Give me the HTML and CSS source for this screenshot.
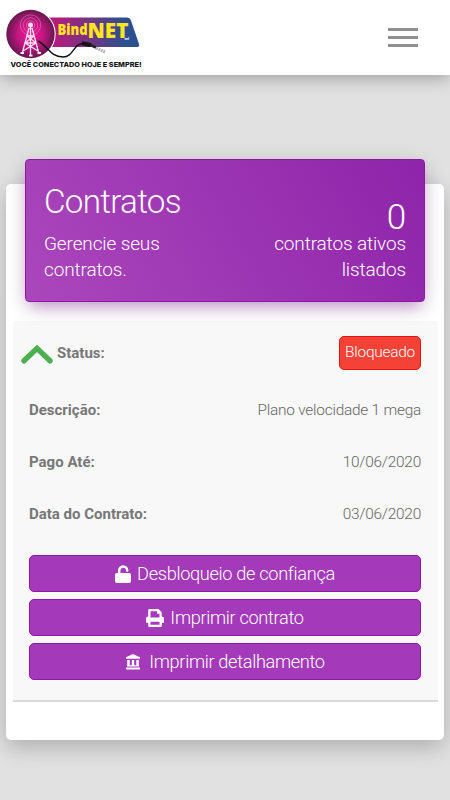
FILE: index.html
```html
<!DOCTYPE html>
<html lang="pt-BR">
<head>
    <meta charset="UTF-8">
    <meta name="viewport" content="width=device-width, initial-scale=1.0">
    <title>Contratos - BindNET</title>
    <link rel="stylesheet" href="styles.css">
</head>
<body>
    <header class="navbar">
        <svg class="logo" viewBox="0 0 150 75" role="img" aria-label="BindNET">
            <defs>
                <linearGradient id="plate" x1="0" x2="1">
                    <stop offset="0" stop-color="#c4157f"/>
                    <stop offset=".45" stop-color="#743582"/>
                    <stop offset=".85" stop-color="#2a5090"/>
                </linearGradient>
                <radialGradient id="disc">
                    <stop offset="0" stop-color="#ed1596"/>
                    <stop offset=".5" stop-color="#c81684"/>
                    <stop offset="1" stop-color="#67184f"/>
                </radialGradient>
            </defs>
            <path d="M48 17.5H127Q130 17.5 130.8 20L139 44Q140 47 137 47H48Z" fill="url(#plate)"/>
            <circle cx="30.5" cy="34" r="25.2" fill="#fff"/>
            <circle cx="30.5" cy="34" r="24.2" fill="url(#disc)"/>
            <g fill="none" stroke="#e98bc2" stroke-width=".5">
                <circle cx="30.5" cy="25" r="4.2"/>
                <circle cx="30.5" cy="25" r="7.2"/>
                <circle cx="30.5" cy="25" r="10.2"/>
            </g>
            <circle cx="30.5" cy="25" r="2.5" fill="#fbe3f0"/>
            <path d="M30.5 26V55M29 28L22 54M32 28L39 54M27 36H34M25 43H36M27 36L36 43M34 36L25 43M25 43L38 51M36 43L23 51" fill="none" stroke="#fbe3f0" stroke-width="1.3"/>
            <path d="M20.5 53H24M29 55.5H32.5M37.5 53H41" stroke="#fbe3f0" stroke-width="2.2"/>
            <path d="M38 41C48 46 50 57 63 57C74 57 73 43 84 43.5L90 44" fill="none" stroke="#111" stroke-width="1.4"/>
            <path d="M82 43.2L91 45" stroke="#151515" stroke-width="4"/>
            <path d="M91 45.2L96 47.5" stroke="#222" stroke-width="2.6"/>
            <path d="M96 48L105 52" stroke="#b5b5b5" stroke-width="3.2" stroke-dasharray="2 .7"/>
            <text class="logo-bind" x="57.5" y="35" textLength="30" lengthAdjust="spacingAndGlyphs">Bind</text>
            <text class="logo-net" x="87.5" y="38" textLength="41" lengthAdjust="spacingAndGlyphs">NET</text>
            <text class="logo-mark" x="124.5" y="39.5">tel</text>
            <text class="logo-tag" x="10.5" y="66.8" textLength="131" lengthAdjust="spacingAndGlyphs">VOCÊ CONECTADO HOJE E SEMPRE!</text>
        </svg>
        <button class="toggler" aria-label="Menu">
            <span></span>
            <span></span>
            <span></span>
        </button>
    </header>

    <main class="card">
        <div class="card-header">
            <div class="heading">
                <h1>Contratos</h1>
                <p>Gerencie seus contratos.</p>
            </div>
            <div class="total">
                <strong>0</strong>
                <p>contratos ativos listados</p>
            </div>
        </div>

        <section class="contract">
            <div class="row status">
                <svg class="chevron" viewBox="0 0 32 20"><path d="M3 16.8L16 4.4L29 16.8"/></svg>
                <b>Status:</b>
                <span class="badge">Bloqueado</span>
            </div>
            <div class="row"><b>Descrição:</b><span>Plano velocidade 1 mega</span></div>
            <div class="row"><b>Pago Até:</b><span>10/06/2020</span></div>
            <div class="row"><b>Data do Contrato:</b><span>03/06/2020</span></div>

            <div class="actions">
                <button class="btn">
                    <svg class="icon-lock" viewBox="0 0 16 18">
                        <rect y="8" width="16" height="10" rx="2"/>
                        <path d="M4.2 9V5.5A4 4 0 0 1 12.2 5.5" fill="none" stroke="#fff" stroke-width="2.5" stroke-linecap="round"/>
                    </svg>
                    Desbloqueio de confiança
                </button>
                <button class="btn">
                    <svg class="icon-print" viewBox="0 0 18 18">
                        <path fill-rule="evenodd" d="M3.4 0H12.5L15.7 3.2V7.5A2.3 2.3 0 0 1 18 9.8V13.7H15.8V16.8Q15.8 18 14.6 18H3.4Q2.2 18 2.2 16.8V13.7H0V9.8A2.3 2.3 0 0 1 2.2 7.5V1.2Q2.2 0 3.4 0ZM4.5 2.3V8.4H13.5V4.7H11.1V2.3ZM4.5 12.8V15.7H13.5V12.8Z"/>
                    </svg>
                    Imprimir contrato
                </button>
                <button class="btn">
                    <svg class="icon-bank" viewBox="0 0 14 16">
                        <path d="M7 0L14 3.2V4.7H0V3.2ZM1.2 6H3.7V12H1.2ZM5.8 6H8.2V12H5.8ZM10.3 6H12.8V12H10.3ZM1 11.2H13V12.5H1ZM0 13.6H14V15.5H0Z"/>
                    </svg>
                    Imprimir detalhamento
                </button>
            </div>
        </section>
    </main>
</body>
</html>
```

FILE: styles.css
```css
* { box-sizing: border-box; }
body { margin: 0; min-height: 800px; background: #e1e1e1; font-family: Roboto, "Liberation Sans", sans-serif; font-weight: 300; color: #666; }
h1, p { margin: 0; font-weight: 300; }
button { border: 0; font-family: inherit; cursor: pointer; }

.navbar { position: relative; display: flex; align-items: center; justify-content: space-between; height: 75px; padding-right: 32px; background: #fff; box-shadow: 0 3px 16px rgba(0, 0, 0, .3); }
.logo { display: block; width: 150px; height: 75px; }
.logo-bind { font: 800 15.5px "Open Sans", sans-serif; fill: #ffe51f; }
.logo-net { font: 800 20.5px "Open Sans", sans-serif; fill: #ffe51f; }
.logo-mark { font: 700 3.5px "Open Sans", sans-serif; fill: #fff; }
.logo-tag { font: 800 6.6px Inter, sans-serif; fill: #111; }
.toggler { display: flex; flex-direction: column; gap: 5px; padding: 0; background: none; }
.toggler span { width: 30px; height: 3px; background: #909090; }

.card { margin: 109px 6px 0; height: 556px; padding: 0 6px 0 7px; border-radius: 5px; background: #fff; box-shadow: 0 7px 22px rgba(0, 0, 0, .23); }
.card-header { position: relative; top: -25px; display: flex; justify-content: space-between; width: 400px; height: 143px; margin: 0 12px; padding: 24px 18px 0; border: 1px solid #9216a6; border-radius: 4px; background: linear-gradient(60deg, #ab47bc, #8e24aa); color: #fff; font-size: 19px; line-height: 26px; letter-spacing: -.13px; box-shadow: 0 9px 15px -5px rgba(156, 39, 176, .42), 0 4px 22px rgba(0, 0, 0, .14); }
.card-header h1 { margin-bottom: 11px; font-size: 33.2px; line-height: 36px; letter-spacing: -.7px; }
.heading { width: 150px; }
.total { width: 150px; text-align: right; }
.total strong { display: block; margin-top: 20px; font-size: 35px; font-weight: 300; line-height: 27px; }

.contract { height: 381px; margin-top: -6px; padding: 0 17px 0 16px; border-bottom: 2px solid #dadada; background: #f8f8f8; font-size: 15.4px; letter-spacing: -.22px; }
.row { display: flex; align-items: center; justify-content: space-between; height: 52px; }
.row b { color: #777; font-size: 15px; font-weight: 700; letter-spacing: 0; }
.status { height: 63px; }
.status b { margin: 0 auto 0 4px; }
.chevron { width: 32px; height: 20px; margin: 3px 0 0 -8px; fill: none; stroke: #4caf50; stroke-width: 5.4; stroke-linecap: round; }
.badge { height: 34px; padding: 0 5px; border: 1px solid #e51313; border-radius: 5px; background: #f44336; color: #fff; font-size: 15.4px; line-height: 31px; }
.actions { display: grid; gap: 7px; margin-top: 15px; }
.btn { display: flex; align-items: center; justify-content: center; height: 37px; padding: 0; border: 1px solid #9216ad; border-radius: 5px; background: #a43ab9; color: #fff; font-size: 18.2px; font-weight: 300; letter-spacing: -.33px; }
.btn svg { margin-right: 6px; fill: #fff; }
.icon-lock { width: 16px; height: 18px; }
.icon-print { width: 18px; height: 18px; }
.btn .icon-bank { width: 14px; height: 16px; margin: 0 9px 0 1px; }
```
